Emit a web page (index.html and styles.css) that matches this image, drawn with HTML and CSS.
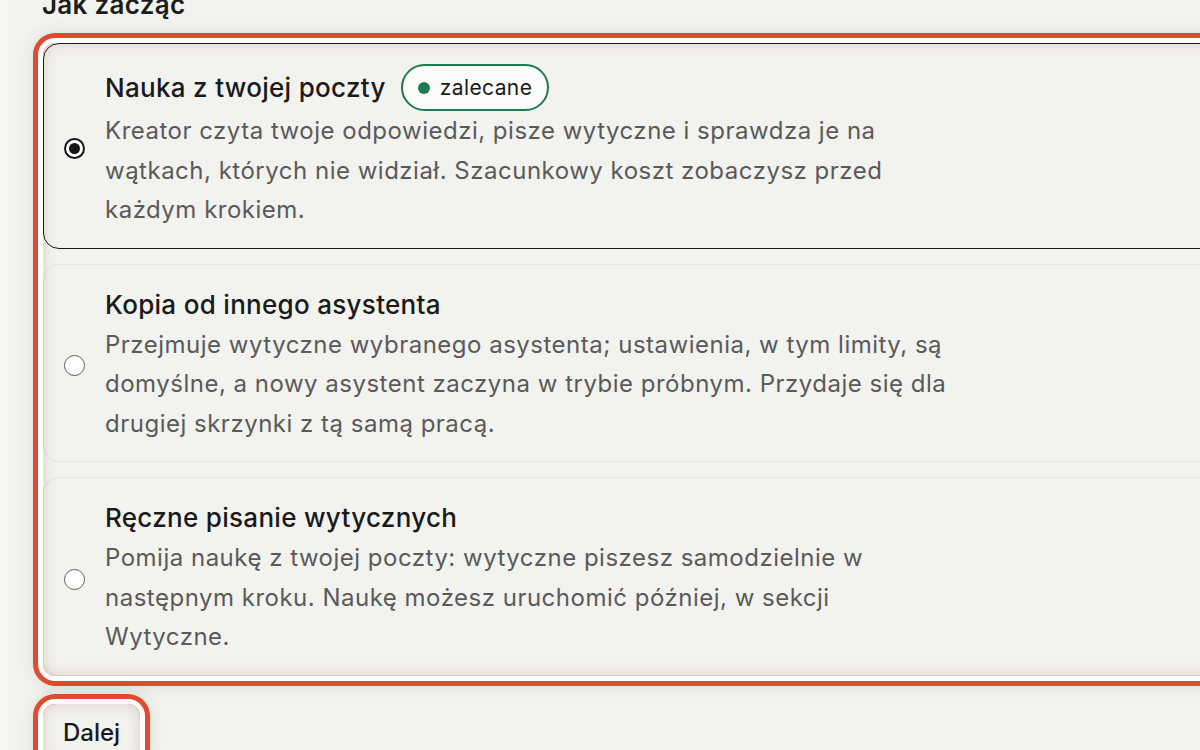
FILE: index.html
```html
<!DOCTYPE html>
<html lang="pl">
<head>
<meta charset="utf-8">
<title>Jak zacząć</title>
<link rel="stylesheet" href="styles.css">
</head>
<body>
<main class="panel">
  <h2 class="section-title">Jak zacząć</h2>
  <div class="options highlight">
    <label class="option option--selected">
      <span class="radio radio--checked"></span>
      <span class="option-body">
        <span class="option-title">Nauka z twojej poczty <span class="badge"><span class="badge-dot"></span>zalecane</span></span>
        <span class="option-desc">Kreator czyta twoje odpowiedzi, pisze wytyczne i sprawdza je na wątkach, których nie widział. Szacunkowy koszt zobaczysz przed każdym krokiem.</span>
      </span>
    </label>
    <label class="option">
      <span class="radio"></span>
      <span class="option-body">
        <span class="option-title">Kopia od innego asystenta</span>
        <span class="option-desc">Przejmuje wytyczne wybranego asystenta; ustawienia, w tym limity, są domyślne, a nowy asystent zaczyna w trybie próbnym. Przydaje się dla drugiej skrzynki z tą samą pracą.</span>
      </span>
    </label>
    <label class="option">
      <span class="radio"></span>
      <span class="option-body">
        <span class="option-title">Ręczne pisanie wytycznych</span>
        <span class="option-desc">Pomija naukę z twojej poczty: wytyczne piszesz samodzielnie w następnym kroku. Naukę możesz uruchomić później, w sekcji Wytyczne.</span>
      </span>
    </label>
  </div>
  <button class="btn highlight" type="button">Dalej</button>
</main>
</body>
</html>
```

FILE: styles.css
```css
html, body {
  margin: 0;
  padding: 0;
  overflow: hidden;
  height: 100%;
}

body {
  background: #f7f7f5;
  font-family: "Inter", "Noto Sans", "Liberation Sans", sans-serif;
  color: #1c1c1c;
}

.panel {
  margin-left: 8px;
  min-height: 100%;
  background: #f2f2ef;
  padding: 0 0 0 34px;
  display: flex;
  flex-direction: column;
  align-items: flex-start;
}

.section-title {
  margin: -11px 0 22px 0;
  font-size: 26px;
  line-height: 32px;
  font-weight: 600;
  letter-spacing: 0.3px;
  color: #1c1c1c;
}

.options {
  width: 1200px;
  margin-left: 1px;
  display: flex;
  flex-direction: column;
  gap: 15px;
}

.highlight {
  position: relative;
}

.highlight::after {
  content: "";
  position: absolute;
  inset: 0;
  border-radius: 12px;
  pointer-events: none;
  box-shadow:
    0 0 0 5px #ffffff,
    0 0 0 10px #e04a2e,
    0 0 16px 10px rgba(0, 0, 0, 0.10),
    inset 0 0 14px rgba(150, 70, 60, 0.22);
}

.option {
  display: grid;
  grid-template-columns: 20px 1fr;
  column-gap: 21px;
  align-items: center;
  padding: 20px 24px 18px 20px;
  border: 1px solid #e3e3df;
  border-radius: 16px;
  background: #f2f2ef;
}

.option--selected {
  border-color: #161616;
}

.radio {
  width: 21px;
  height: 21px;
  box-sizing: border-box;
  border-radius: 50%;
  border: 1.5px solid #5c5c5c;
  background: #ffffff;
  margin-top: 4px;
  margin-left: -0.5px;
  display: flex;
  align-items: center;
  justify-content: center;
}

.radio--checked {
  border: 2px solid #161616;
}

.radio--checked::before {
  content: "";
  width: 11px;
  height: 11px;
  border-radius: 50%;
  background: #161616;
}

.option-body {
  display: flex;
  flex-direction: column;
}

.option-title {
  display: flex;
  align-items: center;
  gap: 15px;
  font-size: 26px;
  line-height: 40px;
  font-weight: 500;
  letter-spacing: 0.3px;
  color: #1a1a1a;
}

.badge {
  display: inline-flex;
  align-items: center;
  gap: 10px;
  padding: 8px 15px 8px 15px;
  border: 2px solid #1f7a52;
  border-radius: 999px;
  background: #fbfbfa;
  font-size: 21px;
  line-height: 27px;
  font-weight: 400;
  letter-spacing: 0.4px;
  color: #1a1a1a;
}

.badge-dot {
  width: 12px;
  height: 12px;
  border-radius: 50%;
  background: #1f7a52;
}

.option-desc {
  max-width: 852px;
  font-size: 24px;
  line-height: 39.5px;
  letter-spacing: 0.5px;
  color: #5a5a5a;
}

.btn {
  margin-top: 27px;
  padding: 13px 20px;
  font-family: inherit;
  font-size: 24px;
  line-height: 32px;
  font-weight: 500;
  color: #1a1a1a;
  background: #f2f2ef;
  border: 1px solid #3a3a3a;
  border-radius: 10px;
}
```
